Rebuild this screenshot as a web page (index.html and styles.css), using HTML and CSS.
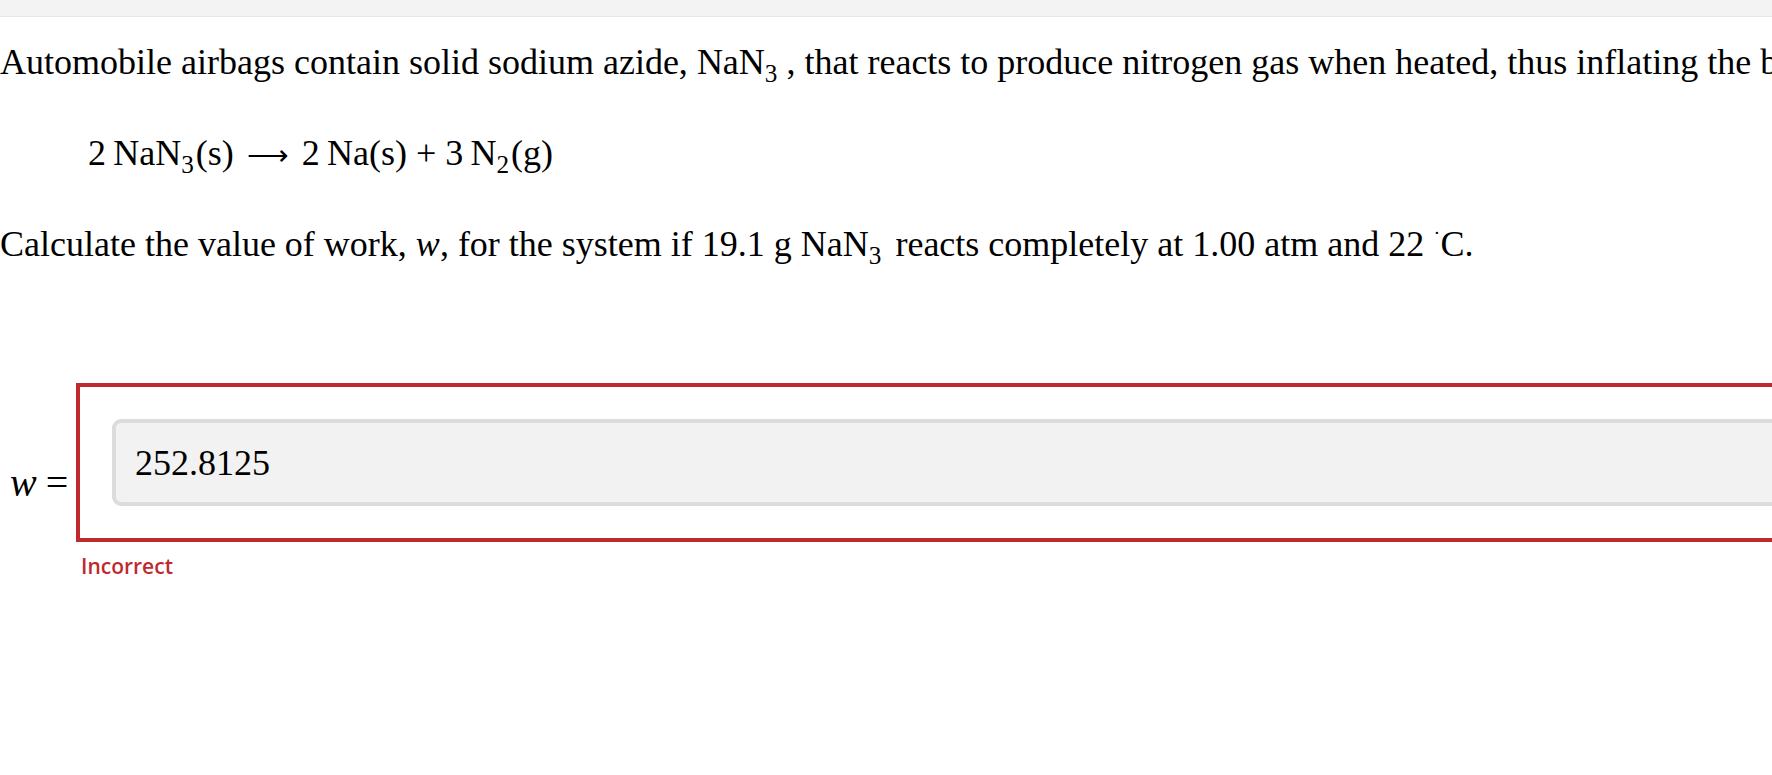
FILE: index.html
```html
<!DOCTYPE html>
<html lang="en">
<head>
<meta charset="utf-8">
<title>Airbag work problem</title>
<link rel="stylesheet" href="styles.css">
</head>
<body>
<div class="topbar"></div>
<main class="content">
  <p class="line intro">Automobile airbags contain solid sodium azide, <span class="chem">NaN<sub class="tight">3</sub></span> , that reacts to produce nitrogen gas when heated, thus inflating the bag.</p>
  <p class="line equation">2&#8201;NaN<sub>3</sub>(s) <span class="arrow">&#10230;</span> 2&#8201;Na(s) + 3&#8201;N<sub>2</sub>(g)</p>
  <p class="line question">Calculate the value of work, <i class="var">w</i>, for the system if 19.1 g NaN<sub>3</sub>&#8196;reacts completely at 1.00 atm and 22 <span class="deg">&#729;</span>C.</p>
  <div class="answer-row">
    <div class="label"><i class="var">w</i><span class="eq">=</span></div>
    <div class="answer-col">
      <div class="answer-box">
        <input class="answer-input" type="text" value="252.8125" aria-label="w">
      </div>
      <div class="feedback">Incorrect</div>
    </div>
  </div>
</main>
</body>
</html>
```
FILE: styles.css
```css
html, body {
  margin: 0;
  padding: 0;
  background: #ffffff;
  overflow: hidden;
}
body {
  width: 1772px;
  height: 775px;
  font-family: "Liberation Serif", "Times New Roman", serif;
  color: #000;
}
.topbar {
  height: 16px;
  background: #f3f3f3;
  border-bottom: 1px solid #e7e7e7;
}
.content {
  padding: 0;
}
.line {
  margin: 0;
  font-size: 36px;
  line-height: 43px;
  white-space: nowrap;
}
.line sub {
  font-size: 0.7em;
  line-height: 0;
  vertical-align: -0.33em;
  padding-right: 2px;
}
.line sub.tight {
  padding-right: 0;
}
.intro {
  margin-top: 24px;
}
.equation {
  margin-top: 48px;
  padding-left: 88px;
  font-size: 36px;
}
.arrow {
  font-size: 0.8em;
  padding: 0 4px;
}
.question {
  margin-top: 46px;
}
.var {
  font-style: italic;
}
.deg {
  font-size: 0.6em;
  vertical-align: 0.45em;
  line-height: 0;
}
.answer-row {
  display: flex;
  margin-top: 117px;
}
.label {
  flex-shrink: 0;
  width: 76px;
  box-sizing: border-box;
  padding: 0 0 38px 10px;
  display: flex;
  align-items: flex-end;
  font-size: 40px;
  line-height: 43px;
  height: 159px;
}
.label .eq {
  margin-left: 9px;
}
.answer-col {
  flex-shrink: 0;
  display: flex;
  flex-direction: column;
}
.answer-box {
  width: 1800px;
  height: 159px;
  box-sizing: border-box;
  border: 4px solid #c0292e;
  padding: 32px;
}
.answer-input {
  display: block;
  width: 100%;
  height: 87px;
  box-sizing: border-box;
  border: 4px solid #dcdcdc;
  border-radius: 9px;
  background: #f2f2f2;
  padding: 0 19px;
  margin: 0;
  font-family: "Liberation Serif", "Times New Roman", serif;
  font-size: 36px;
  color: #000;
  outline: none;
}
.feedback {
  padding-left: 5px;
  margin-top: 10px;
  font-family: "Open Sans", sans-serif;
  font-weight: 600;
  font-size: 21px;
  line-height: 28px;
  color: #c0292e;
}
```
